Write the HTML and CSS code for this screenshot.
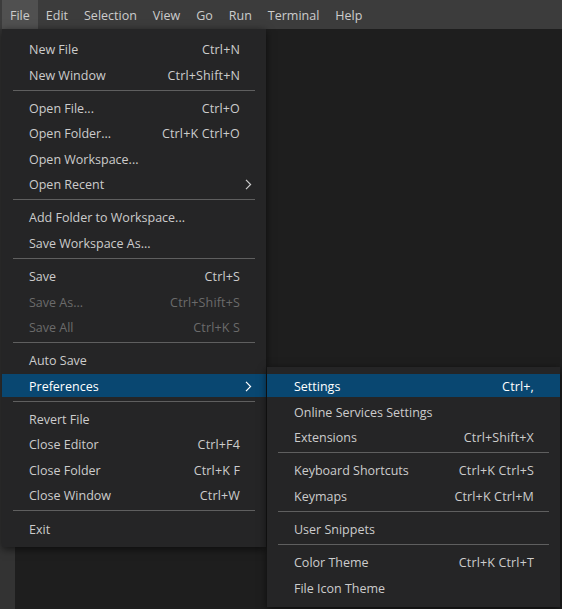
FILE: index.html
```html
<!DOCTYPE html>
<html lang="en">

<head>
    <meta charset="UTF-8">
    <title>Code | File menu</title>
    <link rel="stylesheet" href="styles.css">
</head>

<body>
    <div class="window">
        <div class="menubar">
            <span class="menubar-item open">File</span>
            <span class="menubar-item">Edit</span>
            <span class="menubar-item">Selection</span>
            <span class="menubar-item">View</span>
            <span class="menubar-item">Go</span>
            <span class="menubar-item">Run</span>
            <span class="menubar-item">Terminal</span>
            <span class="menubar-item">Help</span>
        </div>
        <div class="workbench">
            <div class="activitybar"></div>
            <div class="editor"></div>
        </div>

        <div class="menu file-menu">
            <div class="item"><span class="label">New File</span><span class="keys">Ctrl+N</span><span class="more"></span></div>
            <div class="item"><span class="label">New Window</span><span class="keys">Ctrl+Shift+N</span><span class="more"></span></div>
            <div class="separator"></div>
            <div class="item"><span class="label">Open File...</span><span class="keys">Ctrl+O</span><span class="more"></span></div>
            <div class="item"><span class="label">Open Folder...</span><span class="keys">Ctrl+K Ctrl+O</span><span class="more"></span></div>
            <div class="item"><span class="label">Open Workspace...</span><span class="keys"></span><span class="more"></span></div>
            <div class="item"><span class="label">Open Recent</span><span class="keys"></span>
                <span class="more"><svg width="7" height="11" viewBox="0 0 7 11"><path d="M1 0.8 L5.6 5.5 L1 10.2" fill="none" stroke="#cccccc" stroke-width="1.2"/></svg></span>
            </div>
            <div class="separator"></div>
            <div class="item"><span class="label">Add Folder to Workspace...</span><span class="keys"></span><span class="more"></span></div>
            <div class="item"><span class="label">Save Workspace As...</span><span class="keys"></span><span class="more"></span></div>
            <div class="separator"></div>
            <div class="item"><span class="label">Save</span><span class="keys">Ctrl+S</span><span class="more"></span></div>
            <div class="item disabled"><span class="label">Save As...</span><span class="keys">Ctrl+Shift+S</span><span class="more"></span></div>
            <div class="item disabled"><span class="label">Save All</span><span class="keys">Ctrl+K S</span><span class="more"></span></div>
            <div class="separator"></div>
            <div class="item"><span class="label">Auto Save</span><span class="keys"></span><span class="more"></span></div>
            <div class="item active"><span class="label">Preferences</span><span class="keys"></span>
                <span class="more"><svg width="7" height="11" viewBox="0 0 7 11"><path d="M1 0.8 L5.6 5.5 L1 10.2" fill="none" stroke="#ffffff" stroke-width="1.2"/></svg></span>
            </div>
            <div class="separator"></div>
            <div class="item"><span class="label">Revert File</span><span class="keys"></span><span class="more"></span></div>
            <div class="item"><span class="label">Close Editor</span><span class="keys">Ctrl+F4</span><span class="more"></span></div>
            <div class="item"><span class="label">Close Folder</span><span class="keys">Ctrl+K F</span><span class="more"></span></div>
            <div class="item"><span class="label">Close Window</span><span class="keys">Ctrl+W</span><span class="more"></span></div>
            <div class="separator"></div>
            <div class="item"><span class="label">Exit</span><span class="keys"></span><span class="more"></span></div>
        </div>

        <div class="menu sub-menu">
            <div class="item active"><span class="label">Settings</span><span class="keys">Ctrl+,</span><span class="more"></span></div>
            <div class="item"><span class="label">Online Services Settings</span><span class="keys"></span><span class="more"></span></div>
            <div class="item"><span class="label">Extensions</span><span class="keys">Ctrl+Shift+X</span><span class="more"></span></div>
            <div class="separator"></div>
            <div class="item"><span class="label">Keyboard Shortcuts</span><span class="keys">Ctrl+K Ctrl+S</span><span class="more"></span></div>
            <div class="item"><span class="label">Keymaps</span><span class="keys">Ctrl+K Ctrl+M</span><span class="more"></span></div>
            <div class="separator"></div>
            <div class="item"><span class="label">User Snippets</span><span class="keys"></span><span class="more"></span></div>
            <div class="separator"></div>
            <div class="item"><span class="label">Color Theme</span><span class="keys">Ctrl+K Ctrl+T</span><span class="more"></span></div>
            <div class="item"><span class="label">File Icon Theme</span><span class="keys"></span><span class="more"></span></div>
        </div>
    </div>
</body>

</html>
```

FILE: styles.css
```css
html,
body {
    margin: 0;
}

body {
    background-color: #1e1e1e;
    font-family: "Open Sans", "Liberation Sans", sans-serif;
    font-size: 12.5px;
    color: #cccccc;
}

.window {
    position: relative;
    height: 609px;
    display: flex;
    flex-direction: column;
    overflow: hidden;
}

.menubar {
    height: 29px;
    flex-shrink: 0;
    display: flex;
    padding-left: 2px;
    background-color: #3c3c3c;
}

.menubar-item {
    display: flex;
    align-items: center;
    padding: 1px 8px 0;
    color: #cccccc;
}

.menubar-item.open {
    background-color: #505050;
}

.workbench {
    flex: 1;
    display: flex;
}

.activitybar {
    width: 15px;
    background-color: #333333;
}

.editor {
    flex: 1;
    background-color: #1e1e1e;
}

/* dropdown menus sit over the workbench */
.menu {
    position: absolute;
    display: flex;
    flex-direction: column;
    background-color: #252526;
    box-shadow: 0 2px 8px rgba(0, 0, 0, 0.6);
}

.file-menu {
    left: 2px;
    top: 29px;
    width: 264px;
    padding: 7px 0 6px;
}

.sub-menu {
    left: 267px;
    top: 367px;
    width: 293px;
    padding: 6px 0 7px;
}

.item {
    height: 23px;
    margin: 1.2px 0;
    padding: 2px 0 0 27px;
    box-sizing: border-box;
    display: flex;
    align-items: center;
    white-space: nowrap;
}

.item .label {
    flex: 1;
}

.item .keys {
    letter-spacing: 0.15px;
}

.item .more {
    width: 26px;
    padding-left: 5px;
    box-sizing: border-box;
    display: flex;
    align-items: center;
}

.item.active {
    background-color: #094771;
    color: #ffffff;
}

.item.disabled {
    color: #6b6b6b;
}

.separator {
    height: 8px;
    padding-top: 3px;
    box-sizing: border-box;
    margin: 0 11px;
}

.separator::before {
    content: "";
    display: block;
    height: 1px;
    background-color: #5f5f5f;
}
```
